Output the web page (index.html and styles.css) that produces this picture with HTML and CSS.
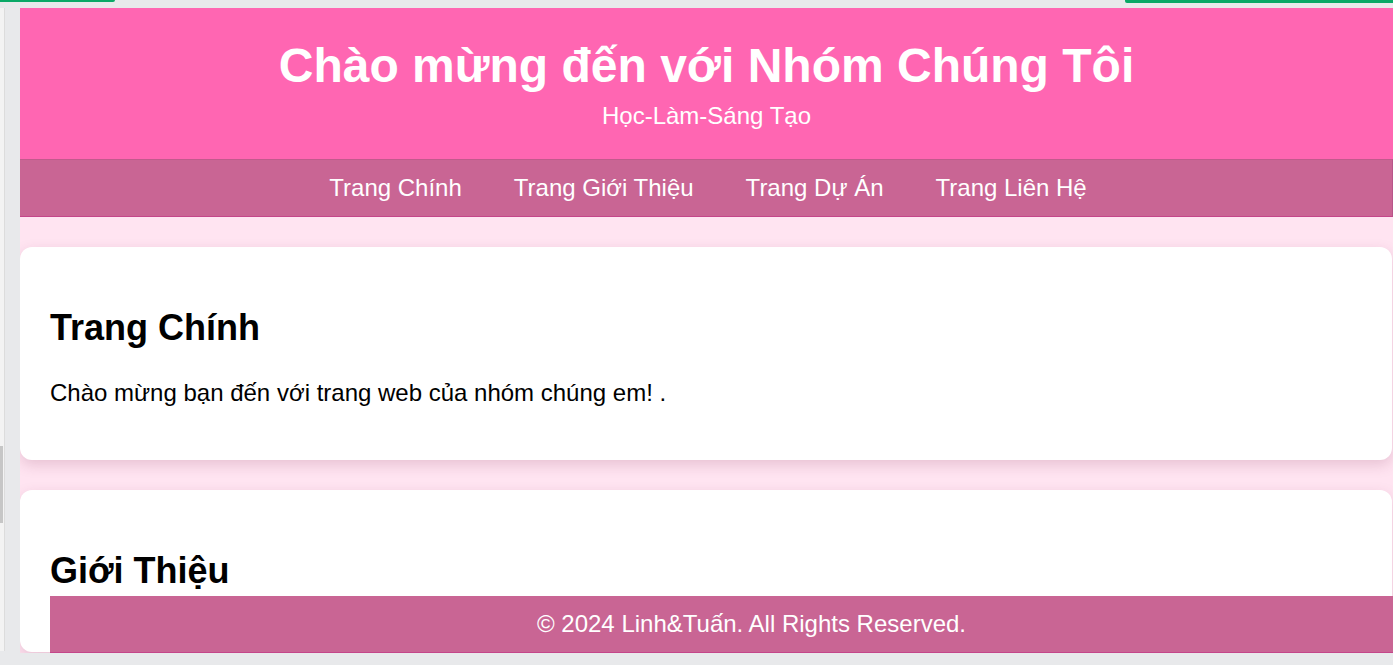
FILE: index.html
```html
<!DOCTYPE html>
<html lang="vi">
<head>
<meta charset="utf-8">
<title>Nhóm Chúng Tôi</title>
<link rel="stylesheet" href="styles.css">
</head>
<body>
<div class="topstrip">
  <div class="green green-left"></div>
  <div class="green green-right"></div>
</div>
<div class="workspace">
  <div class="sidepanel"><div class="thumb"></div></div>
  <div class="frame">
    <header class="site-header">
      <h1>Chào mừng đến với Nhóm Chúng Tôi</h1>
      <p>Học-Làm-Sáng Tạo</p>
    </header>
    <nav class="site-nav">
      <a href="#home">Trang Chính</a>
      <a href="#about">Trang Giới Thiệu</a>
      <a href="#projects">Trang Dự Án</a>
      <a href="#contact">Trang Liên Hệ</a>
    </nav>
    <main class="content">
      <section class="card" id="home">
        <h2>Trang Chính</h2>
        <p>Chào mừng bạn đến với trang web của nhóm chúng em! .</p>
      </section>
      <section class="card" id="about">
        <h2>Giới Thiệu</h2>
      </section>
    </main>
    <footer class="site-footer">© 2024 Linh&amp;Tuấn. All Rights Reserved.</footer>
  </div>
</div>
</body>
</html>
```

FILE: styles.css
```css
html, body {
  margin: 0;
  padding: 0;
}
body {
  width: 1393px;
  height: 665px;
  overflow: hidden;
  background: #e8e9eb;
  font-family: "Liberation Sans", Arial, sans-serif;
}
.topstrip {
  height: 8px;
  display: flex;
  justify-content: space-between;
  align-items: flex-start;
}
.green {
  background: #0aa866;
}
.green-left {
  width: 115px;
  height: 2px;
  border-bottom-right-radius: 2px;
}
.green-right {
  width: 268px;
  height: 3px;
  border-bottom-left-radius: 2px;
}
.workspace {
  display: flex;
  align-items: flex-start;
  gap: 15px;
}
.sidepanel {
  width: 5px;
  height: 643px;
  background: #f3f3f3;
  border-right: 1px solid #dcdcdc;
  padding-top: 438px;
  box-sizing: border-box;
}
.thumb {
  width: 3px;
  height: 77px;
  background: #c6c6c6;
}
.frame {
  position: relative;
  width: 1373px;
  height: 645px;
  overflow: hidden;
  background: #ffe4f1;
  color: #000;
}
.site-header {
  background: #ff66b2;
  color: #fff;
  text-align: center;
  padding: 30px 0 29px;
}
.site-header h1 {
  margin: 0 0 9px;
  font-size: 48px;
  font-weight: bold;
  line-height: 55px;
}
.site-header p {
  margin: 0;
  font-size: 24px;
  line-height: 27.5px;
}
.site-nav {
  background: #c96594;
  border-top: 1px solid #c25a8c;
  border-bottom: 1px solid #c4458a;
  border-right: 1px solid #b8558a;
  padding: 14px 0 15px 4px;
  display: flex;
  justify-content: center;
  gap: 52px;
}
.site-nav a {
  color: #fff;
  text-decoration: none;
  font-size: 24px;
  line-height: 27.5px;
}
.content {
  padding: 30px 1px 0 0;
  display: flex;
  flex-direction: column;
  gap: 30px;
}
.card {
  background: #fff;
  border-radius: 12px;
  padding: 30px;
  box-shadow: 0 5px 14px rgba(120, 40, 80, 0.18);
}
.card h2 {
  margin: 30px 0;
  font-size: 36px;
  font-weight: bold;
  line-height: 41.5px;
}
.card p {
  margin: 24px 0;
  font-size: 24px;
  line-height: 27.5px;
}
.site-footer {
  position: absolute;
  left: 30px;
  bottom: 0;
  width: 1373px;
  padding: 15px;
  background: #c96594;
  border-bottom: 1px solid #c4458a;
  color: #fff;
  text-align: center;
  font-size: 24px;
  line-height: 26px;
}
```
